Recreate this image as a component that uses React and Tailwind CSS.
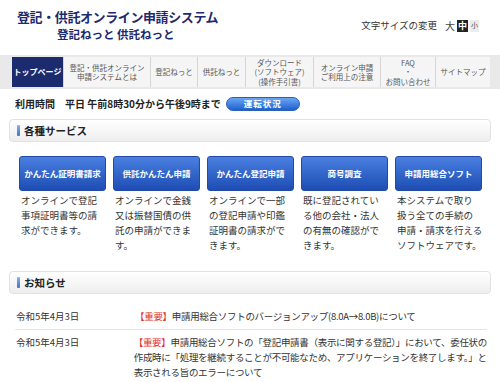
const jp = "font-[family-name:'Noto_Sans_CJK_JP','Noto_Sans',sans-serif]";

const navItems = [
  { lines: ['登記・供託オンライン', '申請システムとは'], w: 'w-[87px]' },
  { lines: ['登記ねっと'], w: 'w-[47px]' },
  { lines: ['供託ねっと'], w: 'w-[48px]' },
  { lines: ['ダウンロード', '(ソフトウェア)', '(操作手引書)'], w: 'w-[68px]' },
  { lines: ['オンライン申請', 'ご利用上の注意'], w: 'w-[67px]' },
  { lines: ['FAQ', '・', 'お問い合わせ'], w: 'w-[55px]' },
  { lines: ['サイトマップ'], w: 'w-[55px]' },
];

const services = [
  { title: 'かんたん証明書請求', lines: ['オンラインで登記', '事項証明書等の請', '求ができます。'] },
  { title: '供託かんたん申請', lines: ['オンラインで金銭', '又は振替国債の供', '託の申請ができま', 'す。'] },
  { title: 'かんたん登記申請', lines: ['オンラインで一部', 'の登記申請や印鑑', '証明書の請求がで', 'きます。'] },
  { title: '商号調査', lines: ['既に登記されてい', 'る他の会社・法人', 'の有無の確認がで', 'きます。'] },
  { title: '申請用総合ソフト', lines: ['本システムで取り', '扱う全ての手続の', '申請・請求を行える', 'ソフトウェアです。'] },
];

const news = [
  { date: '令和5年4月3日', lines: ['申請用総合ソフトのバージョンアップ(8.0A→8.0B)について'] },
  {
    date: '令和5年4月3日',
    lines: [
      '申請用総合ソフトの「登記申請書（表示に関する登記）」において、委任状の',
      '作成時に「処理を継続することが不可能なため、アプリケーションを終了します。」と',
      '表示される旨のエラーについて',
    ],
  },
];

const SectionHead = ({ title }) => (
  <div className="mx-[9px] h-[23px] flex items-center gap-[4px] pl-[7px] border border-[#e2e2e2] rounded-[4px] bg-gradient-to-b from-white to-[#eeeeee]">
    <span className="w-[3px] h-[11px] rounded-[1px] bg-gradient-to-b from-[#8ab4ea] to-[#3c74c8]" />
    <span className="text-[10.5px] font-bold text-[#222]">{title}</span>
  </div>
);

export default function App() {
  return (
    <div className={`w-[500px] h-[382px] overflow-hidden bg-white ${jp}`}>
      {/* header */}
      <div className="h-[55px] flex justify-between">
        <div className="flex flex-col pt-[7px]">
          <div className="pl-[17px] text-[13px] leading-[19px] font-bold tracking-[-0.4px] text-[#1e2a6e]">
            登記・供託オンライン申請システム
          </div>
          <div className="pl-[57px] text-[11.5px] leading-[17px] font-bold text-[#1e2a6e]">
            登記ねっと 供託ねっと
          </div>
        </div>
        <div className="flex items-center gap-[2px] pt-[3px] pr-[21px] h-[48px]">
          <span className="text-[9.5px] text-[#333] mr-[6px]">文字サイズの変更</span>
          <span className="text-[10px] text-[#444]">大</span>
          <span className="w-[11px] h-[12px] flex items-center justify-center bg-[#222] text-white text-[9px] font-bold">中</span>
          <span className="w-[9px] h-[12px] flex items-center justify-center bg-[#ececec] text-[#555] text-[7px] leading-none">小</span>
        </div>
      </div>

      {/* nav */}
      <div className="h-[34px] bg-[#e9e9e9] flex pl-[12px] pt-[2px] pb-[2px]">
        <div className="w-[51px] bg-[#1c2a6e] flex items-center justify-center text-white text-[8px] font-bold">
          トップページ
        </div>
        {navItems.map((item, i) => (
          <div
            key={i}
            className={`${item.w} bg-[#f5f5f5] border-l border-[#d6d6d6] flex flex-col items-center justify-center text-[7.5px] leading-[9.5px] text-[#555] whitespace-nowrap`}
          >
            {item.lines.map((l, j) => (
              <span key={j}>{l}</span>
            ))}
          </div>
        ))}
      </div>

      {/* hours */}
      <div className="h-[30px] flex items-center pl-[15px] pb-[1px] gap-[5px]">
        <span className="text-[10px] font-bold text-[#222] whitespace-nowrap">
          利用時間　平日 午前8時30分から午後9時まで
        </span>
        <span className="w-[74px] h-[14px] rounded-full bg-gradient-to-b from-[#6aa6f2] to-[#1f5fcf] border border-[#2a5fb8] flex items-center justify-center text-white text-[8.5px] font-bold tracking-[1px]">
          運転状況
        </span>
      </div>

      {/* services */}
      <SectionHead title="各種サービス" />
      <div className="flex gap-[7px] pl-[19px] pt-[14px]">
        {services.map((s, i) => (
          <div key={i} className="w-[87px] flex flex-col">
            <div className="h-[35px] rounded-[3px] border border-[#2149a8] bg-gradient-to-b from-[#4a7fe0] to-[#1e4db3] flex items-center justify-center text-white text-[8.5px] font-bold whitespace-nowrap">
              {s.title}
            </div>
            <div className="pt-[2px] pl-[2px] text-[9.5px] leading-[15px] text-[#333] whitespace-nowrap">
              {s.lines.map((l, j) => (
                <div key={j}>{l}</div>
              ))}
            </div>
          </div>
        ))}
      </div>

      {/* news */}
      <div className="mt-[18px]">
        <SectionHead title="お知らせ" />
      </div>
      <div className="mx-[15px] mr-[13px] mt-[11px]">
        {news.map((n, i) => (
          <div key={i} className={`flex py-[5px] ${i === 0 ? 'border-b border-[#e4e4e4] pt-[4px]' : ''}`}>
            <div className="w-[120px] pl-[1px] text-[9.5px] leading-[15px] text-[#333]">{n.date}</div>
            <div className="text-[9.5px] leading-[15px] tracking-[-0.3px] text-[#333] whitespace-nowrap">
              {n.lines.map((l, j) => (
                <div key={j}>
                  {j === 0 && <span className="text-[#e0302a]">【重要】</span>}
                  {l}
                </div>
              ))}
            </div>
          </div>
        ))}
      </div>
    </div>
  );
}
